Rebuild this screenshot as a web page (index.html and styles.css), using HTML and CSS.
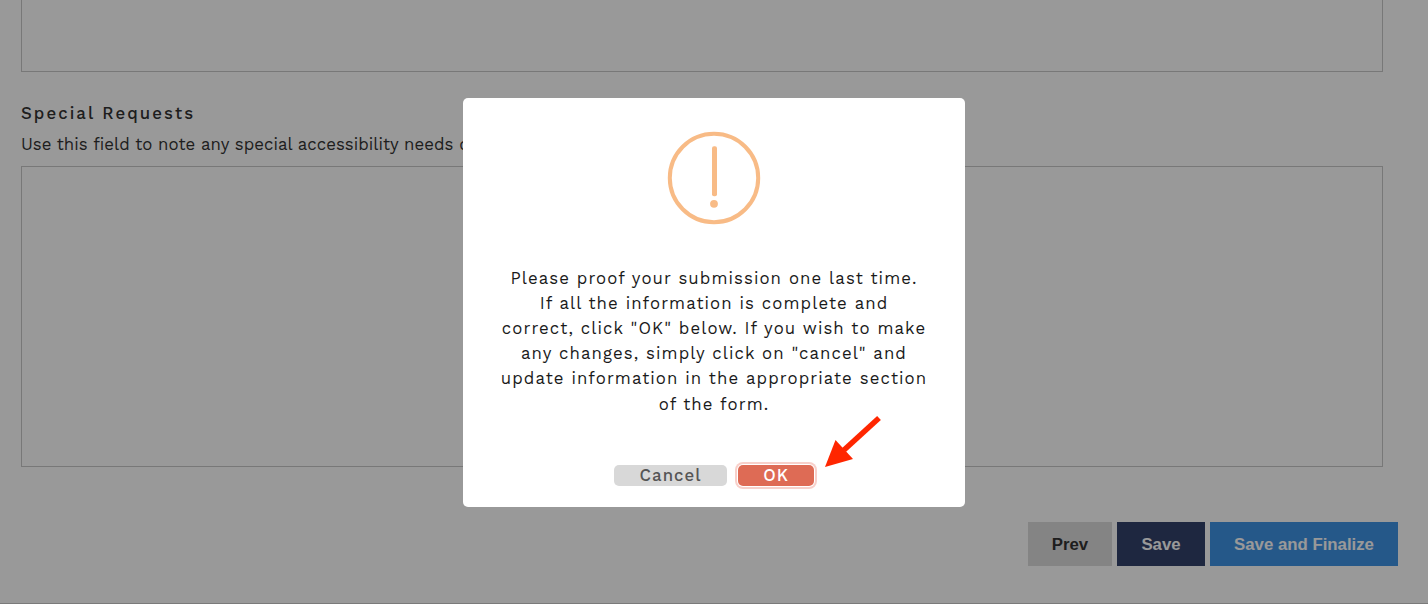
FILE: index.html
```html
<!DOCTYPE html>
<html lang="en">
<head>
    <meta charset="utf-8">
    <title>Special Requests</title>
    <link rel="stylesheet" href="styles.css">
</head>
<body>
    <form class="page">
        <textarea class="field field-top"></textarea>
        <label class="field-label" for="special_requests">Special Requests</label>
        <p class="field-help">Use this field to note any special accessibility needs or requests.</p>
        <textarea class="field field-requests" id="special_requests"></textarea>
        <div class="form-buttons">
            <button type="button" class="button prev">Prev</button>
            <button type="button" class="button save">Save</button>
            <button type="button" class="button finalize">Save and Finalize</button>
        </div>
    </form>

    <div class="overlay">
        <div class="modal">
            <svg class="icon" width="94" height="94" viewBox="0 0 94 94">
                <circle cx="47" cy="47" r="44.2" fill="none" stroke="#f8bb86" stroke-width="4"/>
                <rect x="45" y="15.3" width="5" height="50" rx="2" fill="#f8bb86"/>
                <circle cx="47" cy="72.8" r="3.9" fill="#f8bb86"/>
            </svg>
            <p class="modal-text">
                Please proof your submission one last time.<br>
                If all the information is complete and<br>
                correct, click "OK" below. If you wish to make<br>
                any changes, simply click on "cancel" and<br>
                update information in the appropriate section<br>
                of the form.
            </p>
            <div class="modal-buttons">
                <button type="button" class="modal-button cancel">Cancel</button>
                <button type="button" class="modal-button ok">OK</button>
            </div>
        </div>
        <svg class="arrow" width="60" height="54" viewBox="0 0 60 54">
            <path d="M54 3 L19 35" stroke="#ff2600" stroke-width="5.5" fill="none"/>
            <path d="M0 52 L10.5 25 L28 44 Z" fill="#ff2600"/>
        </svg>
    </div>
</body>
</html>
```

FILE: styles.css
```css
* {
    box-sizing: border-box;
}

body {
    margin: 0;
    height: 604px;
    overflow: hidden;
    background-color: #fff;
    font-family: "Work Sans", "Open Sans", sans-serif;
}

.page {
    display: flex;
    flex-direction: column;
    height: 604px;
    padding: 0 30px 0 21px;
    border-bottom: 1px solid #ccc;
}

.field {
    display: block;
    width: 1362px;
    margin: 0;
    border: 1px solid #c8c8c8;
    background: transparent;
    resize: none;
}

.field-top {
    height: 72px;
    border-top: none;
}

.field-label {
    margin-top: 29px;
    font-size: 16.8px;
    font-weight: 500;
    line-height: 25px;
    letter-spacing: 2.08px;
    color: #333;
}

.field-help {
    margin: 6px 0 9px;
    font-size: 16.8px;
    line-height: 25px;
    letter-spacing: 0.04px;
    color: #333;
}

.field-requests {
    height: 301px;
}

.form-buttons {
    display: flex;
    justify-content: flex-end;
    gap: 5px;
    margin-top: 55px;
}

.button {
    height: 44px;
    padding: 2px 0 0;
    border: 1px solid transparent;
    font-family: "Liberation Sans", sans-serif;
    font-size: 16.8px;
    font-weight: bold;
    color: #fff;
}

.prev {
    width: 84px;
    background-color: #dcdcdc;
    color: #333;
}

.save {
    width: 88px;
    background-color: #32416b;
}

.finalize {
    width: 188px;
    background-color: #3f93e4;
}

.overlay {
    position: fixed;
    inset: 0;
    display: flex;
    justify-content: center;
    align-items: flex-start;
    padding-top: 98px;
    background-color: rgba(0, 0, 0, 0.4);
}

.modal {
    display: flex;
    flex-direction: column;
    align-items: center;
    width: 502px;
    height: 409px;
    padding-top: 33px;
    border-radius: 5px;
    background-color: #fff;
}

.modal-text {
    margin: 40.6px 0 0;
    font-size: 16.8px;
    line-height: 25.2px;
    letter-spacing: 1.09px;
    text-align: center;
    white-space: nowrap;
    color: #1a1a1a;
}

.modal-buttons {
    display: flex;
    gap: 11px;
    margin-top: 48.4px;
}

.modal-button {
    height: 21px;
    padding: 0;
    border: none;
    border-radius: 5px;
    font-family: inherit;
    font-size: 16.8px;
    font-weight: 500;
    line-height: 21px;
    letter-spacing: 1px;
}

.cancel {
    width: 113px;
    background-color: #d8d8d8;
    color: #555;
}

.ok {
    width: 76px;
    background-color: #de6b55;
    color: #fff;
    box-shadow: 0 0 0 1px #fff, 0 0 0 3px #f8d0ca;
}

.arrow {
    position: absolute;
    left: 825px;
    top: 415px;
}
```
